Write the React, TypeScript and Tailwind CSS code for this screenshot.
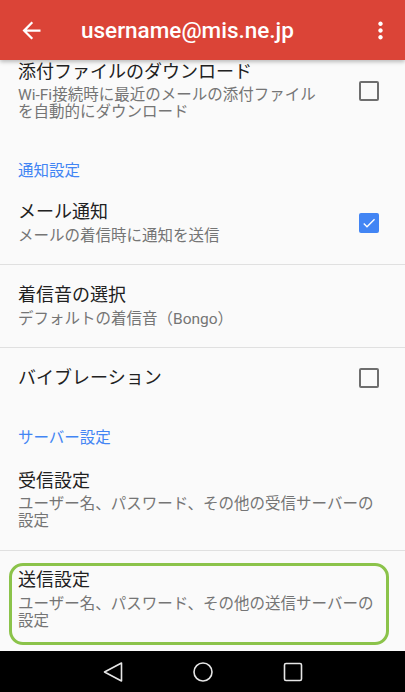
import React from 'react';

const font = { fontFamily: 'Roboto, "Noto Sans CJK JP", sans-serif' };

function Checkbox({ checked }: { checked?: boolean }) {
  if (checked) {
    return (
      <div className="w-[20px] h-[20px] rounded-[2px] bg-[#4285f4] flex items-center justify-center shrink-0">
        <svg width="16" height="16" viewBox="0 0 24 24">
          <path d="M9 16.17L4.83 12l-1.42 1.41L9 19 21 7l-1.41-1.41z" fill="#ffffff" />
        </svg>
      </div>
    );
  }
  return <div className="w-[20px] h-[20px] rounded-[2px] border-[2.5px] border-[#6e6e6e] shrink-0" />;
}

function SectionHeader({ label, className }: { label: string; className: string }) {
  return (
    <div className={`pl-[18px] text-[15.5px] leading-[20px] text-[#4285f4] ${className}`}>{label}</div>
  );
}

export default function App() {
  return (
    <div className="w-[405px] h-[692px] bg-[#fafafa] flex flex-col overflow-hidden" style={font}>
      {/* App bar */}
      <div className="relative z-10 h-[60px] shrink-0 bg-[#db4437] flex items-center pl-[18px] pr-[11px] shadow-[0_2px_4px_rgba(0,0,0,0.25)]">
        <svg width="27" height="27" viewBox="0 0 24 24">
          <path d="M20 11H7.83l5.59-5.59L12 4l-8 8 8 8 1.41-1.41L7.83 13H20v-2z" fill="#ffffff" />
        </svg>
        <div className="ml-[36px] text-white text-[22.5px] font-medium leading-none">username@mis.ne.jp</div>
        <svg className="ml-auto" width="27" height="27" viewBox="0 0 24 24">
          <path
            d="M12 8c1.1 0 2-.9 2-2s-.9-2-2-2-2 .9-2 2 .9 2 2 2zm0 2c-1.1 0-2 .9-2 2s.9 2 2 2 2-.9 2-2-.9-2-2-2zm0 6c-1.1 0-2 .9-2 2s.9 2 2 2 2-.9 2-2-.9-2-2-2z"
            fill="#ffffff"
          />
        </svg>
      </div>

      {/* Settings list */}
      <div className="flex-1 flex flex-col">
        <div className="flex items-center pl-[18px] pr-[26px]">
          <div className="flex-1">
            <div className="text-[18px] leading-[24px] text-[#212121]">添付ファイルのダウンロード</div>
            <div className="mt-[3px] text-[15.5px] leading-[17px] text-[#757575] w-[310px]">
              Wi-Fi接続時に最近のメールの添付ファイルを自動的にダウンロード
            </div>
          </div>
          <Checkbox />
        </div>

        <SectionHeader label="通知設定" className="mt-[40px]" />

        <div className="flex items-center pl-[18px] pr-[26px] mt-[19px]">
          <div className="flex-1">
            <div className="text-[18px] leading-[24px] text-[#212121]">メール通知</div>
            <div className="mt-[2px] text-[15.5px] leading-[20px] text-[#757575]">メールの着信時に通知を送信</div>
          </div>
          <Checkbox checked />
        </div>
        <div className="mt-[18px] h-px bg-[#e0e0e0]" />

        <div className="pl-[18px] pt-[18px] pb-[18px]">
          <div className="text-[18px] leading-[24px] text-[#212121]">着信音の選択</div>
          <div className="mt-[2px] text-[15.5px] leading-[20px] text-[#757575]">デフォルトの着信音（Bongo）</div>
        </div>
        <div className="h-px bg-[#e0e0e0]" />

        <div className="flex items-center pl-[18px] pr-[26px] mt-[18px]">
          <div className="flex-1 text-[18px] leading-[24px] text-[#212121]">バイブレーション</div>
          <Checkbox />
        </div>

        <SectionHeader label="サーバー設定" className="mt-[38px]" />

        <div className="pl-[18px] pr-[20px] mt-[21px] pb-[20px]">
          <div className="text-[18px] leading-[24px] text-[#212121]">受信設定</div>
          <div className="mt-[3px] text-[15.5px] leading-[17px] text-[#757575]">
            ユーザー名、パスワード、その他の受信サーバーの設定
          </div>
        </div>
        <div className="h-px bg-[#e0e0e0]" />

        <div className="mx-[9px] mt-[12px] w-[380px] h-[82px] rounded-[14px] border-[3px] border-[#8bc34a] pl-[6px] pt-[2px]">
          <div className="text-[18px] leading-[24px] text-[#212121]">送信設定</div>
          <div className="mt-[4px] text-[15.5px] leading-[17px] text-[#757575] w-[368px]">
            ユーザー名、パスワード、その他の送信サーバーの設定
          </div>
        </div>
      </div>

      {/* Navigation bar */}
      <div className="h-[41px] shrink-0 bg-black flex items-center justify-center gap-[66px]">
        <svg width="24" height="24" viewBox="0 0 24 24">
          <path d="M20.5 3 L3.5 12 L20.5 21 Z" fill="none" stroke="#e6e6e6" strokeWidth="1.6" strokeLinejoin="round" />
        </svg>
        <svg width="24" height="24" viewBox="0 0 24 24">
          <circle cx="12" cy="12" r="9" fill="none" stroke="#e6e6e6" strokeWidth="1.6" />
        </svg>
        <svg width="24" height="24" viewBox="0 0 24 24">
          <rect x="3.5" y="3.5" width="17" height="17" rx="1.5" fill="none" stroke="#e6e6e6" strokeWidth="1.6" />
        </svg>
      </div>
    </div>
  );
}
